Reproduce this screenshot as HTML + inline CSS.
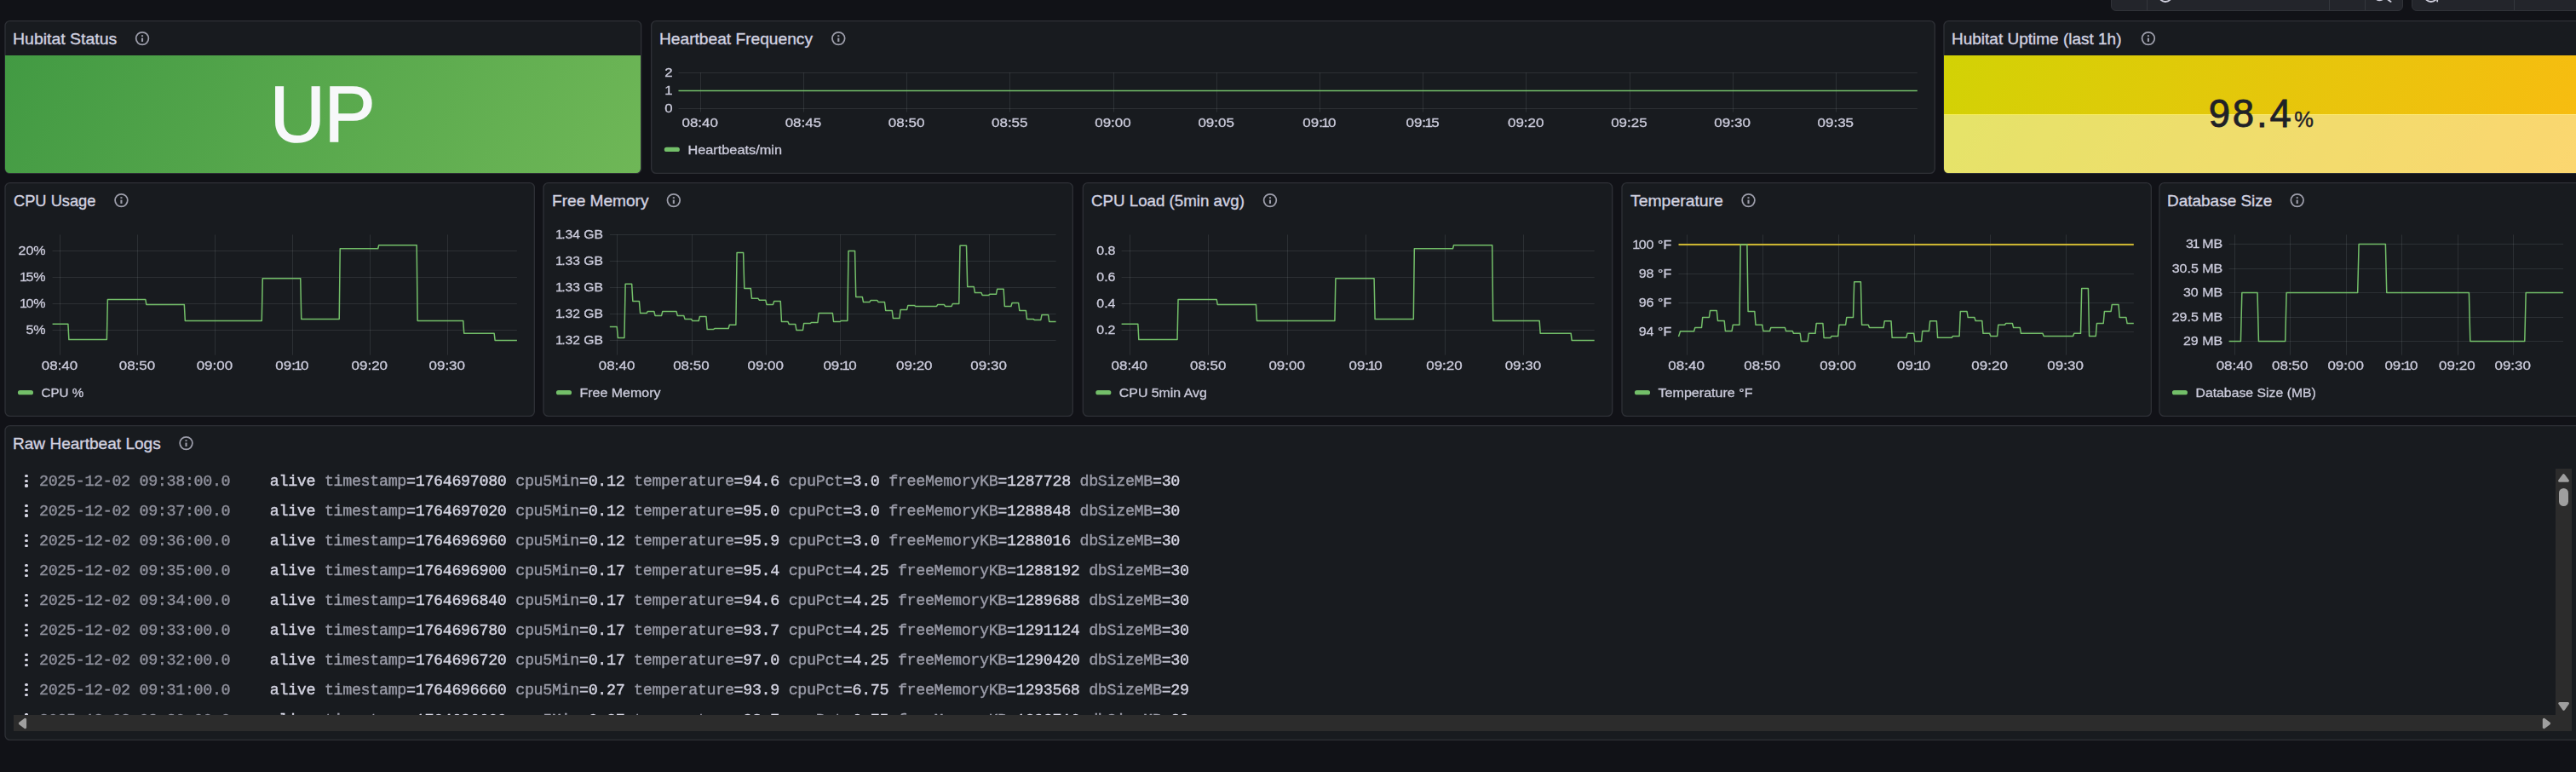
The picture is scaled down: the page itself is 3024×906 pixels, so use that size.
<!DOCTYPE html>
<html><head><meta charset="utf-8"><title>Hubitat</title>
<style>
*{box-sizing:content-box}
html,body{margin:0;padding:0}
body{width:3024px;height:906px;overflow:hidden;background:#111217;position:relative;
font-family:"Liberation Sans",sans-serif;color:#ccccdc}
.p{position:absolute;left:0;top:0;background:#181b1f;border:1px solid #2e3036;border-radius:6px}
.t{position:absolute;font-size:18.05px;line-height:36px;white-space:nowrap;color:#d2d2e0;
-webkit-text-stroke:0.35px #d2d2e0;transform-origin:0 50%}
.stat{position:absolute;border-radius:0 0 5.2px 5.2px;overflow:hidden}
.up{position:absolute;left:-1.2px;width:758.66px;transform:scaleX(0.974);top:64.5px;height:138px;line-height:138px;text-align:center;
font-size:92px;color:#f7f8fa;letter-spacing:-1px;-webkit-text-stroke:1.7px #f7f8fa}
.pct{position:absolute;left:2281.3px;width:746px;top:107.5px;height:66px;text-align:center;color:#1f2127;white-space:nowrap}
.pct .n{font-size:45.5px;letter-spacing:2.85px;-webkit-text-stroke:0.8px #1f2127}
.pct .u{font-size:25.5px;margin-left:0.6px;-webkit-text-stroke:0.4px #1f2127}
svg{position:absolute;left:0;top:0;will-change:transform}
svg.bg{will-change:auto}
svg text{font-family:"Liberation Sans",sans-serif}
.tb{position:absolute;top:-20px;height:30.6px;background:#23252b;border:1px solid #303238;border-radius:6px}
.tbd{position:absolute;top:0;height:12px;width:1.2px;background:#34373d}
.logs{position:absolute;left:16px;top:547.9px;width:2984px;height:291.3px;overflow:hidden;
font-family:"Liberation Mono",monospace;font-size:18.4px;letter-spacing:-0.356px;white-space:pre;will-change:transform;-webkit-text-stroke:0.4px}
.lr{position:absolute;left:0;height:35px;line-height:35px;width:100%}
.lr .ts{position:absolute;left:30px;color:#8e8f9b}
.lr .ln{position:absolute;left:300.8px}
.lr b{font-weight:normal;color:#d4d4e2}
.lr i{font-style:normal;color:#9a9ba8}
.lr u{text-decoration:none;color:#c4c4d3}
.dots{position:absolute;left:13.4px;top:8.8px;width:3.4px}
.dots s{display:block;width:3.2px;height:3.2px;border-radius:50%;background:#d6d6e4;margin-bottom:2.65px}
.sbh{position:absolute;left:16px;top:839.2px;width:3003.2px;height:18.6px;background:#2c2c2c}
.sbv{position:absolute;left:3000.2px;top:550.4px;width:19px;height:289px;background:#2c2c2c}
.thumb{position:absolute;left:3003.9px;top:572.8px;width:11.3px;height:21.4px;border-radius:5.65px;background:#9f9f9f}
</style></head>
<body>
<svg class="bg" width="3024" height="906" viewBox="0 0 3024 906">
<rect x="6.00" y="24.67" width="746.67" height="178.67" rx="5.6" fill="#181b1f" stroke="#2e3036" stroke-width="1.333"/>
<rect x="764.67" y="24.67" width="1506.67" height="178.67" rx="5.6" fill="#181b1f" stroke="#2e3036" stroke-width="1.333"/>
<rect x="2282.00" y="24.67" width="747.34" height="178.67" rx="5.6" fill="#181b1f" stroke="#2e3036" stroke-width="1.333"/>
<rect x="6.00" y="214.67" width="621.34" height="273.67" rx="5.6" fill="#181b1f" stroke="#2e3036" stroke-width="1.333"/>
<rect x="638.00" y="214.67" width="621.34" height="273.67" rx="5.6" fill="#181b1f" stroke="#2e3036" stroke-width="1.333"/>
<rect x="1271.34" y="214.67" width="621.33" height="273.67" rx="5.6" fill="#181b1f" stroke="#2e3036" stroke-width="1.333"/>
<rect x="1904.00" y="214.67" width="621.34" height="273.67" rx="5.6" fill="#181b1f" stroke="#2e3036" stroke-width="1.333"/>
<rect x="2534.97" y="214.67" width="494.37" height="273.67" rx="5.6" fill="#181b1f" stroke="#2e3036" stroke-width="1.333"/>
<rect x="6.00" y="499.67" width="3023.34" height="368.67" rx="5.6" fill="#181b1f" stroke="#2e3036" stroke-width="1.333"/>
</svg>
<div class="tb" style="left:2478px;width:341px"></div>
<div class="tbd" style="left:2519.8px"></div>
<div class="tbd" style="left:2733.8px"></div>
<div class="tbd" style="left:2775.8px"></div>
<div class="tb" style="left:2830.5px;width:220px"></div>
<div class="tbd" style="left:2951px"></div>
<div class="t" style="left:15.13px;top:28.10px;transform:scaleX(1.0798)">Hubitat Status</div>
<div class="t" style="left:773.60px;top:28.10px;transform:scaleX(1.0627)">Heartbeat Frequency</div>
<div class="t" style="left:2290.93px;top:28.10px;transform:scaleX(1.0532)">Hubitat Uptime (last 1h)</div>
<div class="stat" style="left:6.33px;top:65px;width:746px;height:137.67px;background:linear-gradient(120deg,#429a43,#6fb757)"></div>
<div class="up">UP</div>
<div class="stat" style="left:2282.33px;top:65px;width:746.67px;height:137.67px;background:linear-gradient(120deg,#d2d205,#f9bb11)"><div style="position:absolute;left:0;right:0;top:69.2px;bottom:0;background:rgba(255,255,255,0.4)"></div><div style="position:absolute;left:0;right:0;top:69.3px;height:1.2px;background:linear-gradient(90deg,#f6ef5a,#ffe982)"></div></div>
<div class="pct"><span class="n">98.4</span><span class="u">%</span></div>
<div class="t" style="left:15.73px;top:218.10px;transform:scaleX(1.0130)">CPU Usage</div>
<div class="t" style="left:647.53px;top:218.10px;transform:scaleX(1.0585)">Free Memory</div>
<div class="t" style="left:1280.87px;top:218.10px;transform:scaleX(1.0380)">CPU Load (5min avg)</div>
<div class="t" style="left:1913.93px;top:218.10px;transform:scaleX(1.0750)">Temperature</div>
<div class="t" style="left:2543.90px;top:218.10px;transform:scaleX(1.0519)">Database Size</div>
<div class="t" style="left:14.73px;top:503.10px;transform:scaleX(1.0568)">Raw Heartbeat Logs</div>
<div class="logs">
<div class="lr" style="top:0.00px"><span class="dots"><s></s><s></s><s></s></span><span class="ts">2025-12-02 09:38:00.0</span><span class="ln"><b>alive</b> <i>timestamp</i><u>=</u><b>1764697080</b> <i>cpu5Min</i><u>=</u><b>0.12</b> <i>temperature</i><u>=</u><b>94.6</b> <i>cpuPct</i><u>=</u><b>3.0</b> <i>freeMemoryKB</i><u>=</u><b>1287728</b> <i>dbSizeMB</i><u>=</u><b>30</b></span></div>
<div class="lr" style="top:35.03px"><span class="dots"><s></s><s></s><s></s></span><span class="ts">2025-12-02 09:37:00.0</span><span class="ln"><b>alive</b> <i>timestamp</i><u>=</u><b>1764697020</b> <i>cpu5Min</i><u>=</u><b>0.12</b> <i>temperature</i><u>=</u><b>95.0</b> <i>cpuPct</i><u>=</u><b>3.0</b> <i>freeMemoryKB</i><u>=</u><b>1288848</b> <i>dbSizeMB</i><u>=</u><b>30</b></span></div>
<div class="lr" style="top:70.06px"><span class="dots"><s></s><s></s><s></s></span><span class="ts">2025-12-02 09:36:00.0</span><span class="ln"><b>alive</b> <i>timestamp</i><u>=</u><b>1764696960</b> <i>cpu5Min</i><u>=</u><b>0.12</b> <i>temperature</i><u>=</u><b>95.9</b> <i>cpuPct</i><u>=</u><b>3.0</b> <i>freeMemoryKB</i><u>=</u><b>1288016</b> <i>dbSizeMB</i><u>=</u><b>30</b></span></div>
<div class="lr" style="top:105.09px"><span class="dots"><s></s><s></s><s></s></span><span class="ts">2025-12-02 09:35:00.0</span><span class="ln"><b>alive</b> <i>timestamp</i><u>=</u><b>1764696900</b> <i>cpu5Min</i><u>=</u><b>0.17</b> <i>temperature</i><u>=</u><b>95.4</b> <i>cpuPct</i><u>=</u><b>4.25</b> <i>freeMemoryKB</i><u>=</u><b>1288192</b> <i>dbSizeMB</i><u>=</u><b>30</b></span></div>
<div class="lr" style="top:140.12px"><span class="dots"><s></s><s></s><s></s></span><span class="ts">2025-12-02 09:34:00.0</span><span class="ln"><b>alive</b> <i>timestamp</i><u>=</u><b>1764696840</b> <i>cpu5Min</i><u>=</u><b>0.17</b> <i>temperature</i><u>=</u><b>94.6</b> <i>cpuPct</i><u>=</u><b>4.25</b> <i>freeMemoryKB</i><u>=</u><b>1289688</b> <i>dbSizeMB</i><u>=</u><b>30</b></span></div>
<div class="lr" style="top:175.15px"><span class="dots"><s></s><s></s><s></s></span><span class="ts">2025-12-02 09:33:00.0</span><span class="ln"><b>alive</b> <i>timestamp</i><u>=</u><b>1764696780</b> <i>cpu5Min</i><u>=</u><b>0.17</b> <i>temperature</i><u>=</u><b>93.7</b> <i>cpuPct</i><u>=</u><b>4.25</b> <i>freeMemoryKB</i><u>=</u><b>1291124</b> <i>dbSizeMB</i><u>=</u><b>30</b></span></div>
<div class="lr" style="top:210.18px"><span class="dots"><s></s><s></s><s></s></span><span class="ts">2025-12-02 09:32:00.0</span><span class="ln"><b>alive</b> <i>timestamp</i><u>=</u><b>1764696720</b> <i>cpu5Min</i><u>=</u><b>0.17</b> <i>temperature</i><u>=</u><b>97.0</b> <i>cpuPct</i><u>=</u><b>4.25</b> <i>freeMemoryKB</i><u>=</u><b>1290420</b> <i>dbSizeMB</i><u>=</u><b>30</b></span></div>
<div class="lr" style="top:245.21px"><span class="dots"><s></s><s></s><s></s></span><span class="ts">2025-12-02 09:31:00.0</span><span class="ln"><b>alive</b> <i>timestamp</i><u>=</u><b>1764696660</b> <i>cpu5Min</i><u>=</u><b>0.27</b> <i>temperature</i><u>=</u><b>93.9</b> <i>cpuPct</i><u>=</u><b>6.75</b> <i>freeMemoryKB</i><u>=</u><b>1293568</b> <i>dbSizeMB</i><u>=</u><b>29</b></span></div>
<div class="lr" style="top:280.24px"><span class="dots"><s></s><s></s><s></s></span><span class="ts">2025-12-02 09:30:00.0</span><span class="ln"><b>alive</b> <i>timestamp</i><u>=</u><b>1764696600</b> <i>cpu5Min</i><u>=</u><b>0.27</b> <i>temperature</i><u>=</u><b>93.7</b> <i>cpuPct</i><u>=</u><b>6.75</b> <i>freeMemoryKB</i><u>=</u><b>1292716</b> <i>dbSizeMB</i><u>=</u><b>29</b></span></div>
</div>
<div class="sbh"></div><div class="sbv"></div><div class="thumb"></div>
<svg width="3024" height="906" viewBox="0 0 3024 906">
<circle cx="2542" cy="-5.6" r="7.6" stroke="#d0d0de" stroke-width="1.8" fill="none" stroke-linecap="round"/>
<circle cx="2793.5" cy="-6.5" r="6.8" stroke="#d0d0de" stroke-width="1.8" fill="none" stroke-linecap="round"/>
<path d="M2799.5,-3 L2806.6,1.9" stroke="#d0d0de" stroke-width="1.8" fill="none" stroke-linecap="round"/>
<circle cx="2853.8" cy="-5.6" r="7.6" stroke="#d0d0de" stroke-width="1.8" fill="none" stroke-linecap="round"/>
<path d="M2861.2,-3 V1.6" stroke="#d0d0de" stroke-width="1.8" fill="none" stroke-linecap="round"/>
<circle cx="167.03" cy="45.10" r="7.35" stroke="#9d9eab" fill="none" stroke-width="1.75"/><rect x="165.98" y="44.55" width="2.1" height="4.4" fill="#9d9eab"/><rect x="165.98" y="41.25" width="2.1" height="1.7" fill="#9d9eab"/>
<circle cx="984.30" cy="45.10" r="7.35" stroke="#9d9eab" fill="none" stroke-width="1.75"/><rect x="983.25" y="44.55" width="2.1" height="4.4" fill="#9d9eab"/><rect x="983.25" y="41.25" width="2.1" height="1.7" fill="#9d9eab"/>
<circle cx="2521.93" cy="45.10" r="7.35" stroke="#9d9eab" fill="none" stroke-width="1.75"/><rect x="2520.88" y="44.55" width="2.1" height="4.4" fill="#9d9eab"/><rect x="2520.88" y="41.25" width="2.1" height="1.7" fill="#9d9eab"/>
<rect x="796.50" y="85" width="1454.30" height="1" fill="rgba(240,250,255,0.095)"/>
<rect x="796.50" y="127" width="1454.30" height="1" fill="rgba(240,250,255,0.095)"/>
<rect x="796.50" y="106" width="1454.30" height="1" fill="rgba(240,250,255,0.095)"/>
<text transform="translate(789.50,90.10) scale(1.1,1)" text-anchor="end" font-size="15.3" fill="#ccccdc" stroke="#ccccdc" stroke-width="0.3">2</text>
<text transform="translate(791.20,111.20) scale(1.1,1)" text-anchor="end" font-size="15.3" fill="#ccccdc" stroke="#ccccdc" stroke-width="0.3"><tspan dx="-1.50">1</tspan></text>
<text transform="translate(789.50,132.20) scale(1.1,1)" text-anchor="end" font-size="15.3" fill="#ccccdc" stroke="#ccccdc" stroke-width="0.3">0</text>
<rect x="822" y="85.30" width="1" height="46.20" fill="rgba(240,250,255,0.095)"/>
<text transform="translate(821.70,148.50) scale(1.11,1)" text-anchor="middle" font-size="15.3" fill="#ccccdc" stroke="#ccccdc" stroke-width="0.3">08:40</text>
<rect x="943" y="85.30" width="1" height="46.20" fill="rgba(240,250,255,0.095)"/>
<text transform="translate(942.89,148.50) scale(1.11,1)" text-anchor="middle" font-size="15.3" fill="#ccccdc" stroke="#ccccdc" stroke-width="0.3">08:45</text>
<rect x="1064" y="85.30" width="1" height="46.20" fill="rgba(240,250,255,0.095)"/>
<text transform="translate(1064.08,148.50) scale(1.11,1)" text-anchor="middle" font-size="15.3" fill="#ccccdc" stroke="#ccccdc" stroke-width="0.3">08:50</text>
<rect x="1185" y="85.30" width="1" height="46.20" fill="rgba(240,250,255,0.095)"/>
<text transform="translate(1185.27,148.50) scale(1.11,1)" text-anchor="middle" font-size="15.3" fill="#ccccdc" stroke="#ccccdc" stroke-width="0.3">08:55</text>
<rect x="1307" y="85.30" width="1" height="46.20" fill="rgba(240,250,255,0.095)"/>
<text transform="translate(1306.46,148.50) scale(1.11,1)" text-anchor="middle" font-size="15.3" fill="#ccccdc" stroke="#ccccdc" stroke-width="0.3">09:00</text>
<rect x="1428" y="85.30" width="1" height="46.20" fill="rgba(240,250,255,0.095)"/>
<text transform="translate(1427.65,148.50) scale(1.11,1)" text-anchor="middle" font-size="15.3" fill="#ccccdc" stroke="#ccccdc" stroke-width="0.3">09:05</text>
<rect x="1549" y="85.30" width="1" height="46.20" fill="rgba(240,250,255,0.095)"/>
<text transform="translate(1548.84,148.50) scale(1.11,1)" text-anchor="middle" font-size="15.3" fill="#ccccdc" stroke="#ccccdc" stroke-width="0.3">09:<tspan dx="-1.50">1</tspan><tspan dx="-1.50">0</tspan></text>
<rect x="1670" y="85.30" width="1" height="46.20" fill="rgba(240,250,255,0.095)"/>
<text transform="translate(1670.03,148.50) scale(1.11,1)" text-anchor="middle" font-size="15.3" fill="#ccccdc" stroke="#ccccdc" stroke-width="0.3">09:<tspan dx="-1.50">1</tspan><tspan dx="-1.50">5</tspan></text>
<rect x="1791" y="85.30" width="1" height="46.20" fill="rgba(240,250,255,0.095)"/>
<text transform="translate(1791.22,148.50) scale(1.11,1)" text-anchor="middle" font-size="15.3" fill="#ccccdc" stroke="#ccccdc" stroke-width="0.3">09:20</text>
<rect x="1913" y="85.30" width="1" height="46.20" fill="rgba(240,250,255,0.095)"/>
<text transform="translate(1912.41,148.50) scale(1.11,1)" text-anchor="middle" font-size="15.3" fill="#ccccdc" stroke="#ccccdc" stroke-width="0.3">09:25</text>
<rect x="2034" y="85.30" width="1" height="46.20" fill="rgba(240,250,255,0.095)"/>
<text transform="translate(2033.60,148.50) scale(1.11,1)" text-anchor="middle" font-size="15.3" fill="#ccccdc" stroke="#ccccdc" stroke-width="0.3">09:30</text>
<rect x="2155" y="85.30" width="1" height="46.20" fill="rgba(240,250,255,0.095)"/>
<text transform="translate(2154.79,148.50) scale(1.11,1)" text-anchor="middle" font-size="15.3" fill="#ccccdc" stroke="#ccccdc" stroke-width="0.3">09:35</text>
<path d="M796.5,106.4H2250.8" stroke="#73bf69" stroke-width="1.5" fill="none" stroke-linejoin="round"/>
<rect x="779.80" y="172.80" width="18.1" height="5.3" rx="2.65" fill="#73bf69"/>
<text transform="translate(807.40,180.50) scale(1.067,1)" text-anchor="start" font-size="15.3" fill="#ccccdc" stroke="#ccccdc" stroke-width="0.3">Heartbeats/min</text>
<circle cx="142.43" cy="235.10" r="7.35" stroke="#9d9eab" fill="none" stroke-width="1.75"/><rect x="141.38" y="234.55" width="2.1" height="4.4" fill="#9d9eab"/><rect x="141.38" y="231.25" width="2.1" height="1.7" fill="#9d9eab"/>
<circle cx="790.83" cy="235.10" r="7.35" stroke="#9d9eab" fill="none" stroke-width="1.75"/><rect x="789.78" y="234.55" width="2.1" height="4.4" fill="#9d9eab"/><rect x="789.78" y="231.25" width="2.1" height="1.7" fill="#9d9eab"/>
<circle cx="1490.97" cy="235.10" r="7.35" stroke="#9d9eab" fill="none" stroke-width="1.75"/><rect x="1489.92" y="234.55" width="2.1" height="4.4" fill="#9d9eab"/><rect x="1489.92" y="231.25" width="2.1" height="1.7" fill="#9d9eab"/>
<circle cx="2052.53" cy="235.10" r="7.35" stroke="#9d9eab" fill="none" stroke-width="1.75"/><rect x="2051.48" y="234.55" width="2.1" height="4.4" fill="#9d9eab"/><rect x="2051.48" y="231.25" width="2.1" height="1.7" fill="#9d9eab"/>
<circle cx="2696.70" cy="235.10" r="7.35" stroke="#9d9eab" fill="none" stroke-width="1.75"/><rect x="2695.65" y="234.55" width="2.1" height="4.4" fill="#9d9eab"/><rect x="2695.65" y="231.25" width="2.1" height="1.7" fill="#9d9eab"/>
<rect x="61.60" y="294" width="545.30" height="1" fill="rgba(240,250,255,0.095)"/>
<rect x="61.60" y="325" width="545.30" height="1" fill="rgba(240,250,255,0.095)"/>
<rect x="61.60" y="356" width="545.30" height="1" fill="rgba(240,250,255,0.095)"/>
<rect x="61.60" y="387" width="545.30" height="1" fill="rgba(240,250,255,0.095)"/>
<text transform="translate(53.60,299.00) scale(1.05,1)" text-anchor="end" font-size="15.3" fill="#ccccdc" stroke="#ccccdc" stroke-width="0.3">20%</text>
<text transform="translate(55.18,330.00) scale(1.05,1)" text-anchor="end" font-size="15.3" fill="#ccccdc" stroke="#ccccdc" stroke-width="0.3"><tspan dx="-1.50">1</tspan><tspan dx="-1.50">5</tspan>%</text>
<text transform="translate(55.18,361.20) scale(1.05,1)" text-anchor="end" font-size="15.3" fill="#ccccdc" stroke="#ccccdc" stroke-width="0.3"><tspan dx="-1.50">1</tspan><tspan dx="-1.50">0</tspan>%</text>
<text transform="translate(53.60,392.20) scale(1.05,1)" text-anchor="end" font-size="15.3" fill="#ccccdc" stroke="#ccccdc" stroke-width="0.3">5%</text>
<rect x="70" y="275.40" width="1" height="141.30" fill="rgba(240,250,255,0.095)"/>
<text transform="translate(70.00,433.90) scale(1.11,1)" text-anchor="middle" font-size="15.3" fill="#ccccdc" stroke="#ccccdc" stroke-width="0.3">08:40</text>
<rect x="161" y="275.40" width="1" height="141.30" fill="rgba(240,250,255,0.095)"/>
<text transform="translate(160.95,433.90) scale(1.11,1)" text-anchor="middle" font-size="15.3" fill="#ccccdc" stroke="#ccccdc" stroke-width="0.3">08:50</text>
<rect x="252" y="275.40" width="1" height="141.30" fill="rgba(240,250,255,0.095)"/>
<text transform="translate(251.90,433.90) scale(1.11,1)" text-anchor="middle" font-size="15.3" fill="#ccccdc" stroke="#ccccdc" stroke-width="0.3">09:00</text>
<rect x="343" y="275.40" width="1" height="141.30" fill="rgba(240,250,255,0.095)"/>
<text transform="translate(342.85,433.90) scale(1.11,1)" text-anchor="middle" font-size="15.3" fill="#ccccdc" stroke="#ccccdc" stroke-width="0.3">09:<tspan dx="-1.50">1</tspan><tspan dx="-1.50">0</tspan></text>
<rect x="434" y="275.40" width="1" height="141.30" fill="rgba(240,250,255,0.095)"/>
<text transform="translate(433.80,433.90) scale(1.11,1)" text-anchor="middle" font-size="15.3" fill="#ccccdc" stroke="#ccccdc" stroke-width="0.3">09:20</text>
<rect x="525" y="275.40" width="1" height="141.30" fill="rgba(240,250,255,0.095)"/>
<text transform="translate(524.75,433.90) scale(1.11,1)" text-anchor="middle" font-size="15.3" fill="#ccccdc" stroke="#ccccdc" stroke-width="0.3">09:30</text>
<rect x="20.93" y="458.00" width="18.1" height="5.3" rx="2.65" fill="#73bf69"/>
<text transform="translate(48.53,465.70) scale(0.99,1)" text-anchor="start" font-size="15.3" fill="#ccccdc" stroke="#ccccdc" stroke-width="0.3">CPU %</text>
<path d="M61.60,380.30 L79.89,380.30 L80.89,398.60 L125.37,398.60 L126.37,351.60 L170.84,351.60 L171.84,357.40 L216.32,357.40 L217.32,376.40 L307.27,376.40 L308.27,326.70 L352.75,326.70 L353.75,374.50 L398.22,374.50 L399.22,291.70 L443.70,291.70 L444.70,287.80 L489.17,287.80 L490.17,376.40 L543.74,376.40 L544.74,391.20 L580.12,391.20 L581.12,399.40 L606.90,399.40" stroke="#73bf69" stroke-width="1.5" fill="none" stroke-linejoin="round"/>
<rect x="715.80" y="275" width="523.80" height="1" fill="rgba(240,250,255,0.095)"/>
<rect x="715.80" y="306" width="523.80" height="1" fill="rgba(240,250,255,0.095)"/>
<rect x="715.80" y="337" width="523.80" height="1" fill="rgba(240,250,255,0.095)"/>
<rect x="715.80" y="368" width="523.80" height="1" fill="rgba(240,250,255,0.095)"/>
<rect x="715.80" y="399" width="523.80" height="1" fill="rgba(240,250,255,0.095)"/>
<text transform="translate(709.54,280.10) scale(1.025,1)" text-anchor="end" font-size="15.3" fill="#ccccdc" stroke="#ccccdc" stroke-width="0.3"><tspan dx="-1.50">1</tspan><tspan dx="-1.50">.</tspan>34 GB</text>
<text transform="translate(709.54,311.00) scale(1.025,1)" text-anchor="end" font-size="15.3" fill="#ccccdc" stroke="#ccccdc" stroke-width="0.3"><tspan dx="-1.50">1</tspan><tspan dx="-1.50">.</tspan>33 GB</text>
<text transform="translate(709.54,342.30) scale(1.025,1)" text-anchor="end" font-size="15.3" fill="#ccccdc" stroke="#ccccdc" stroke-width="0.3"><tspan dx="-1.50">1</tspan><tspan dx="-1.50">.</tspan>33 GB</text>
<text transform="translate(709.54,373.20) scale(1.025,1)" text-anchor="end" font-size="15.3" fill="#ccccdc" stroke="#ccccdc" stroke-width="0.3"><tspan dx="-1.50">1</tspan><tspan dx="-1.50">.</tspan>32 GB</text>
<text transform="translate(709.54,404.30) scale(1.025,1)" text-anchor="end" font-size="15.3" fill="#ccccdc" stroke="#ccccdc" stroke-width="0.3"><tspan dx="-1.50">1</tspan><tspan dx="-1.50">.</tspan>32 GB</text>
<rect x="724" y="275.30" width="1" height="141.40" fill="rgba(240,250,255,0.095)"/>
<text transform="translate(724.10,433.90) scale(1.11,1)" text-anchor="middle" font-size="15.3" fill="#ccccdc" stroke="#ccccdc" stroke-width="0.3">08:40</text>
<rect x="812" y="275.30" width="1" height="141.40" fill="rgba(240,250,255,0.095)"/>
<text transform="translate(811.40,433.90) scale(1.11,1)" text-anchor="middle" font-size="15.3" fill="#ccccdc" stroke="#ccccdc" stroke-width="0.3">08:50</text>
<rect x="899" y="275.30" width="1" height="141.40" fill="rgba(240,250,255,0.095)"/>
<text transform="translate(898.70,433.90) scale(1.11,1)" text-anchor="middle" font-size="15.3" fill="#ccccdc" stroke="#ccccdc" stroke-width="0.3">09:00</text>
<rect x="986" y="275.30" width="1" height="141.40" fill="rgba(240,250,255,0.095)"/>
<text transform="translate(986.00,433.90) scale(1.11,1)" text-anchor="middle" font-size="15.3" fill="#ccccdc" stroke="#ccccdc" stroke-width="0.3">09:<tspan dx="-1.50">1</tspan><tspan dx="-1.50">0</tspan></text>
<rect x="1074" y="275.30" width="1" height="141.40" fill="rgba(240,250,255,0.095)"/>
<text transform="translate(1073.30,433.90) scale(1.11,1)" text-anchor="middle" font-size="15.3" fill="#ccccdc" stroke="#ccccdc" stroke-width="0.3">09:20</text>
<rect x="1161" y="275.30" width="1" height="141.40" fill="rgba(240,250,255,0.095)"/>
<text transform="translate(1160.60,433.90) scale(1.11,1)" text-anchor="middle" font-size="15.3" fill="#ccccdc" stroke="#ccccdc" stroke-width="0.3">09:30</text>
<rect x="652.93" y="458.00" width="18.1" height="5.3" rx="2.65" fill="#73bf69"/>
<text transform="translate(680.53,465.70) scale(1.045,1)" text-anchor="start" font-size="15.3" fill="#ccccdc" stroke="#ccccdc" stroke-width="0.3">Free Memory</text>
<path d="M715.80,383.50 L724.20,383.50 L725.40,396.55 L732.93,396.55 L734.13,333.34 L741.66,333.34 L742.86,353.45 L750.39,353.45 L751.59,367.54 L759.12,367.54 L760.32,365.47 L767.85,365.47 L769.05,370.44 L776.58,370.44 L777.78,365.47 L794.04,365.47 L795.24,370.44 L802.77,370.44 L803.97,374.38 L811.50,374.38 L812.70,376.45 L820.23,376.45 L821.43,371.48 L828.96,371.48 L830.16,386.40 L837.69,386.40 L838.89,385.57 L855.15,385.57 L856.35,381.22 L863.88,381.22 L865.08,296.45 L872.61,296.45 L873.81,338.52 L881.34,338.52 L882.54,350.34 L890.07,350.34 L891.27,352.20 L898.80,352.20 L900.00,357.38 L907.53,357.38 L908.73,353.45 L916.26,353.45 L917.46,377.49 L924.99,377.49 L926.19,380.39 L933.72,380.39 L934.92,387.44 L942.45,387.44 L943.65,379.56 L951.18,379.56 L952.38,378.52 L959.91,378.52 L961.11,367.54 L977.37,367.54 L978.57,377.49 L986.10,377.49 L987.30,376.45 L994.83,376.45 L996.03,294.38 L1003.56,294.38 L1004.76,348.47 L1012.29,348.47 L1013.49,354.48 L1021.02,354.48 L1022.22,352.41 L1029.75,352.41 L1030.95,354.48 L1038.48,354.48 L1039.68,364.43 L1047.21,364.43 L1048.41,373.55 L1055.94,373.55 L1057.14,363.39 L1064.67,363.39 L1065.87,358.42 L1073.40,358.42 L1074.60,359.46 L1099.59,359.46 L1100.79,357.38 L1108.32,357.38 L1109.52,359.46 L1117.05,359.46 L1118.25,356.55 L1125.78,356.55 L1126.98,288.37 L1134.51,288.37 L1135.71,336.45 L1143.24,336.45 L1144.44,343.50 L1151.97,343.50 L1153.17,346.40 L1160.70,346.40 L1161.90,345.36 L1169.43,345.36 L1170.63,339.35 L1178.16,339.35 L1179.36,359.46 L1186.89,359.46 L1188.09,355.52 L1195.62,355.52 L1196.82,364.43 L1204.35,364.43 L1205.55,374.38 L1213.08,374.38 L1214.28,375.41 L1221.81,375.41 L1223.01,369.40 L1230.54,369.40 L1231.74,377.49 L1239.60,377.49" stroke="#73bf69" stroke-width="1.5" fill="none" stroke-linejoin="round"/>
<rect x="1316.60" y="294" width="555.10" height="1" fill="rgba(240,250,255,0.095)"/>
<rect x="1316.60" y="325" width="555.10" height="1" fill="rgba(240,250,255,0.095)"/>
<rect x="1316.60" y="356" width="555.10" height="1" fill="rgba(240,250,255,0.095)"/>
<rect x="1316.60" y="387" width="555.10" height="1" fill="rgba(240,250,255,0.095)"/>
<text transform="translate(1309.50,299.00) scale(1.043,1)" text-anchor="end" font-size="15.3" fill="#ccccdc" stroke="#ccccdc" stroke-width="0.3">0.8</text>
<text transform="translate(1309.50,330.00) scale(1.043,1)" text-anchor="end" font-size="15.3" fill="#ccccdc" stroke="#ccccdc" stroke-width="0.3">0.6</text>
<text transform="translate(1309.50,361.20) scale(1.043,1)" text-anchor="end" font-size="15.3" fill="#ccccdc" stroke="#ccccdc" stroke-width="0.3">0.4</text>
<text transform="translate(1309.50,392.20) scale(1.043,1)" text-anchor="end" font-size="15.3" fill="#ccccdc" stroke="#ccccdc" stroke-width="0.3">0.2</text>
<rect x="1326" y="275.40" width="1" height="141.30" fill="rgba(240,250,255,0.095)"/>
<text transform="translate(1325.80,433.90) scale(1.11,1)" text-anchor="middle" font-size="15.3" fill="#ccccdc" stroke="#ccccdc" stroke-width="0.3">08:40</text>
<rect x="1418" y="275.40" width="1" height="141.30" fill="rgba(240,250,255,0.095)"/>
<text transform="translate(1418.22,433.90) scale(1.11,1)" text-anchor="middle" font-size="15.3" fill="#ccccdc" stroke="#ccccdc" stroke-width="0.3">08:50</text>
<rect x="1511" y="275.40" width="1" height="141.30" fill="rgba(240,250,255,0.095)"/>
<text transform="translate(1510.64,433.90) scale(1.11,1)" text-anchor="middle" font-size="15.3" fill="#ccccdc" stroke="#ccccdc" stroke-width="0.3">09:00</text>
<rect x="1603" y="275.40" width="1" height="141.30" fill="rgba(240,250,255,0.095)"/>
<text transform="translate(1603.06,433.90) scale(1.11,1)" text-anchor="middle" font-size="15.3" fill="#ccccdc" stroke="#ccccdc" stroke-width="0.3">09:<tspan dx="-1.50">1</tspan><tspan dx="-1.50">0</tspan></text>
<rect x="1696" y="275.40" width="1" height="141.30" fill="rgba(240,250,255,0.095)"/>
<text transform="translate(1695.48,433.90) scale(1.11,1)" text-anchor="middle" font-size="15.3" fill="#ccccdc" stroke="#ccccdc" stroke-width="0.3">09:20</text>
<rect x="1788" y="275.40" width="1" height="141.30" fill="rgba(240,250,255,0.095)"/>
<text transform="translate(1787.90,433.90) scale(1.11,1)" text-anchor="middle" font-size="15.3" fill="#ccccdc" stroke="#ccccdc" stroke-width="0.3">09:30</text>
<rect x="1286.27" y="458.00" width="18.1" height="5.3" rx="2.65" fill="#73bf69"/>
<text transform="translate(1313.87,465.70) scale(1.038,1)" text-anchor="start" font-size="15.3" fill="#ccccdc" stroke="#ccccdc" stroke-width="0.3">CPU 5min Avg</text>
<path d="M1316.60,380.30 L1335.84,380.30 L1336.84,398.60 L1382.05,398.60 L1383.05,351.60 L1428.26,351.60 L1429.26,357.40 L1474.47,357.40 L1475.47,376.40 L1566.89,376.40 L1567.89,326.70 L1613.10,326.70 L1614.10,374.50 L1659.31,374.50 L1660.31,291.70 L1705.52,291.70 L1706.52,287.80 L1751.73,287.80 L1752.73,376.40 L1807.18,376.40 L1808.18,391.20 L1844.15,391.20 L1845.15,399.40 L1871.70,399.40" stroke="#73bf69" stroke-width="1.5" fill="none" stroke-linejoin="round"/>
<rect x="1970.50" y="321" width="534.30" height="1" fill="rgba(240,250,255,0.095)"/>
<rect x="1970.50" y="355" width="534.30" height="1" fill="rgba(240,250,255,0.095)"/>
<rect x="1970.50" y="389" width="534.30" height="1" fill="rgba(240,250,255,0.095)"/>
<text transform="translate(1962.20,326.10) scale(1.05,1)" text-anchor="end" font-size="15.3" fill="#ccccdc" stroke="#ccccdc" stroke-width="0.3">98 °F</text>
<text transform="translate(1962.20,360.10) scale(1.05,1)" text-anchor="end" font-size="15.3" fill="#ccccdc" stroke="#ccccdc" stroke-width="0.3">96 °F</text>
<text transform="translate(1962.20,394.10) scale(1.05,1)" text-anchor="end" font-size="15.3" fill="#ccccdc" stroke="#ccccdc" stroke-width="0.3">94 °F</text>
<rect x="1980" y="275.40" width="1" height="141.30" fill="rgba(240,250,255,0.095)"/>
<text transform="translate(1979.60,433.90) scale(1.11,1)" text-anchor="middle" font-size="15.3" fill="#ccccdc" stroke="#ccccdc" stroke-width="0.3">08:40</text>
<rect x="2069" y="275.40" width="1" height="141.30" fill="rgba(240,250,255,0.095)"/>
<text transform="translate(2068.60,433.90) scale(1.11,1)" text-anchor="middle" font-size="15.3" fill="#ccccdc" stroke="#ccccdc" stroke-width="0.3">08:50</text>
<rect x="2158" y="275.40" width="1" height="141.30" fill="rgba(240,250,255,0.095)"/>
<text transform="translate(2157.60,433.90) scale(1.11,1)" text-anchor="middle" font-size="15.3" fill="#ccccdc" stroke="#ccccdc" stroke-width="0.3">09:00</text>
<rect x="2247" y="275.40" width="1" height="141.30" fill="rgba(240,250,255,0.095)"/>
<text transform="translate(2246.60,433.90) scale(1.11,1)" text-anchor="middle" font-size="15.3" fill="#ccccdc" stroke="#ccccdc" stroke-width="0.3">09:<tspan dx="-1.50">1</tspan><tspan dx="-1.50">0</tspan></text>
<rect x="2336" y="275.40" width="1" height="141.30" fill="rgba(240,250,255,0.095)"/>
<text transform="translate(2335.60,433.90) scale(1.11,1)" text-anchor="middle" font-size="15.3" fill="#ccccdc" stroke="#ccccdc" stroke-width="0.3">09:20</text>
<rect x="2425" y="275.40" width="1" height="141.30" fill="rgba(240,250,255,0.095)"/>
<text transform="translate(2424.60,433.90) scale(1.11,1)" text-anchor="middle" font-size="15.3" fill="#ccccdc" stroke="#ccccdc" stroke-width="0.3">09:30</text>
<rect x="1918.93" y="458.00" width="18.1" height="5.3" rx="2.65" fill="#73bf69"/>
<text transform="translate(1946.53,465.70) scale(1.052,1)" text-anchor="start" font-size="15.3" fill="#ccccdc" stroke="#ccccdc" stroke-width="0.3">Temperature °F</text>
<text transform="translate(1963.78,291.90) scale(1.05,1)" text-anchor="end" font-size="15.3" fill="#ccccdc" stroke="#ccccdc" stroke-width="0.3"><tspan dx="-1.50">1</tspan><tspan dx="-1.50">0</tspan>0 °F</text>
<rect x="1970.5" y="286" width="534.3" height="2.1" fill="#cbb532"/>
<path d="M1970.5,394.90 L1972.6,388.68 L1988.60,388.68 L1989.80,384.53 L1997.50,384.53 L1998.70,372.51 L2006.40,372.51 L2007.60,364.43 L2015.30,364.43 L2016.50,376.45 L2024.20,376.45 L2025.40,388.47 L2033.10,388.47 L2034.30,381.22 L2042.00,381.22 L2043.20,287.12 L2050.90,287.12 L2052.10,365.47 L2059.80,365.47 L2061.00,381.22 L2068.70,381.22 L2069.90,388.47 L2077.60,388.47 L2078.80,384.53 L2095.40,384.53 L2096.60,388.47 L2104.30,388.47 L2105.50,391.37 L2113.20,391.37 L2114.40,400.49 L2122.10,400.49 L2123.30,391.37 L2131.00,391.37 L2132.20,379.56 L2139.90,379.56 L2141.10,396.55 L2148.80,396.55 L2150.00,394.48 L2157.70,394.48 L2158.90,381.22 L2166.60,381.22 L2167.80,372.51 L2175.50,372.51 L2176.70,330.65 L2184.40,330.65 L2185.60,381.22 L2193.30,381.22 L2194.50,384.53 L2211.10,384.53 L2212.30,376.66 L2220.00,376.66 L2221.20,396.35 L2237.80,396.35 L2239.00,391.37 L2246.70,391.37 L2247.90,400.49 L2255.60,400.49 L2256.80,388.47 L2264.50,388.47 L2265.70,376.66 L2273.40,376.66 L2274.60,396.35 L2291.20,396.35 L2292.40,394.48 L2300.10,394.48 L2301.30,365.47 L2309.00,365.47 L2310.20,372.51 L2317.90,372.51 L2319.10,376.45 L2326.80,376.45 L2328.00,391.37 L2335.70,391.37 L2336.90,394.48 L2344.60,394.48 L2345.80,381.22 L2353.50,381.22 L2354.70,379.56 L2362.40,379.56 L2363.60,384.53 L2371.30,384.53 L2372.50,391.37 L2398.00,391.37 L2399.20,394.48 L2433.60,394.48 L2434.80,391.37 L2442.50,391.37 L2443.70,338.52 L2451.40,338.52 L2452.60,394.48 L2460.30,394.48 L2461.50,379.56 L2469.20,379.56 L2470.40,365.47 L2478.10,365.47 L2479.30,357.38 L2487.00,357.38 L2488.20,372.51 L2495.90,372.51 L2497.10,379.56 L2504.80,379.56" stroke="#73bf69" stroke-width="1.5" fill="none" stroke-linejoin="round"/>
<rect x="2616.60" y="286" width="392.50" height="1" fill="rgba(240,250,255,0.095)"/>
<rect x="2616.60" y="315" width="392.50" height="1" fill="rgba(240,250,255,0.095)"/>
<rect x="2616.60" y="343" width="392.50" height="1" fill="rgba(240,250,255,0.095)"/>
<rect x="2616.60" y="372" width="392.50" height="1" fill="rgba(240,250,255,0.095)"/>
<rect x="2616.60" y="400" width="392.50" height="1" fill="rgba(240,250,255,0.095)"/>
<text transform="translate(2609.20,291.30) scale(1.046,1)" text-anchor="end" font-size="15.3" fill="#ccccdc" stroke="#ccccdc" stroke-width="0.3">3<tspan dx="-1.50">1</tspan><tspan dx="-1.50"> </tspan>MB</text>
<text transform="translate(2609.20,319.90) scale(1.046,1)" text-anchor="end" font-size="15.3" fill="#ccccdc" stroke="#ccccdc" stroke-width="0.3">30.5 MB</text>
<text transform="translate(2609.20,348.30) scale(1.046,1)" text-anchor="end" font-size="15.3" fill="#ccccdc" stroke="#ccccdc" stroke-width="0.3">30 MB</text>
<text transform="translate(2609.20,376.90) scale(1.046,1)" text-anchor="end" font-size="15.3" fill="#ccccdc" stroke="#ccccdc" stroke-width="0.3">29.5 MB</text>
<text transform="translate(2609.20,405.30) scale(1.046,1)" text-anchor="end" font-size="15.3" fill="#ccccdc" stroke="#ccccdc" stroke-width="0.3">29 MB</text>
<rect x="2623" y="275.40" width="1" height="141.30" fill="rgba(240,250,255,0.095)"/>
<text transform="translate(2622.90,433.90) scale(1.11,1)" text-anchor="middle" font-size="15.3" fill="#ccccdc" stroke="#ccccdc" stroke-width="0.3">08:40</text>
<rect x="2688" y="275.40" width="1" height="141.30" fill="rgba(240,250,255,0.095)"/>
<text transform="translate(2688.26,433.90) scale(1.11,1)" text-anchor="middle" font-size="15.3" fill="#ccccdc" stroke="#ccccdc" stroke-width="0.3">08:50</text>
<rect x="2754" y="275.40" width="1" height="141.30" fill="rgba(240,250,255,0.095)"/>
<text transform="translate(2753.62,433.90) scale(1.11,1)" text-anchor="middle" font-size="15.3" fill="#ccccdc" stroke="#ccccdc" stroke-width="0.3">09:00</text>
<rect x="2819" y="275.40" width="1" height="141.30" fill="rgba(240,250,255,0.095)"/>
<text transform="translate(2818.98,433.90) scale(1.11,1)" text-anchor="middle" font-size="15.3" fill="#ccccdc" stroke="#ccccdc" stroke-width="0.3">09:<tspan dx="-1.50">1</tspan><tspan dx="-1.50">0</tspan></text>
<rect x="2885" y="275.40" width="1" height="141.30" fill="rgba(240,250,255,0.095)"/>
<text transform="translate(2884.34,433.90) scale(1.11,1)" text-anchor="middle" font-size="15.3" fill="#ccccdc" stroke="#ccccdc" stroke-width="0.3">09:20</text>
<rect x="2950" y="275.40" width="1" height="141.30" fill="rgba(240,250,255,0.095)"/>
<text transform="translate(2949.70,433.90) scale(1.11,1)" text-anchor="middle" font-size="15.3" fill="#ccccdc" stroke="#ccccdc" stroke-width="0.3">09:30</text>
<rect x="2549.90" y="458.00" width="18.1" height="5.3" rx="2.65" fill="#73bf69"/>
<text transform="translate(2577.50,465.70) scale(1.033,1)" text-anchor="start" font-size="15.3" fill="#ccccdc" stroke="#ccccdc" stroke-width="0.3">Database Size (MB)</text>
<path d="M2616.60,400.50 L2630.44,400.50 L2631.84,343.50 L2650.04,343.50 L2651.44,400.50 L2682.72,400.50 L2684.12,343.50 L2767.69,343.50 L2769.09,286.50 L2800.37,286.50 L2801.77,343.50 L2898.41,343.50 L2899.81,400.50 L2963.77,400.50 L2965.17,343.50 L3009.10,343.50" stroke="#73bf69" stroke-width="1.5" fill="none" stroke-linejoin="round"/>
<circle cx="218.53" cy="520.10" r="7.35" stroke="#9d9eab" fill="none" stroke-width="1.75"/><rect x="217.48" y="519.55" width="2.1" height="4.4" fill="#9d9eab"/><rect x="217.48" y="516.25" width="2.1" height="1.7" fill="#9d9eab"/>
<path d="M3004.6,564.2 L3009.5,557.7 L3014.4,564.2Z" fill="#9f9f9f" stroke="#9f9f9f" stroke-width="3" stroke-linejoin="round"/>
<path d="M3004.7,825.5 L3009.6,832.4 L3014.5,825.5Z" fill="#9f9f9f" stroke="#9f9f9f" stroke-width="3" stroke-linejoin="round"/>
<path d="M2986.3,844.2 L2992.6,848.95 L2986.3,853.7Z" fill="#9f9f9f" stroke="#9f9f9f" stroke-width="3" stroke-linejoin="round"/>
<path d="M29.6,844.2 L23.3,848.95 L29.6,853.7Z" fill="#9f9f9f" stroke="#9f9f9f" stroke-width="3" stroke-linejoin="round"/>
</svg>
</body></html>
